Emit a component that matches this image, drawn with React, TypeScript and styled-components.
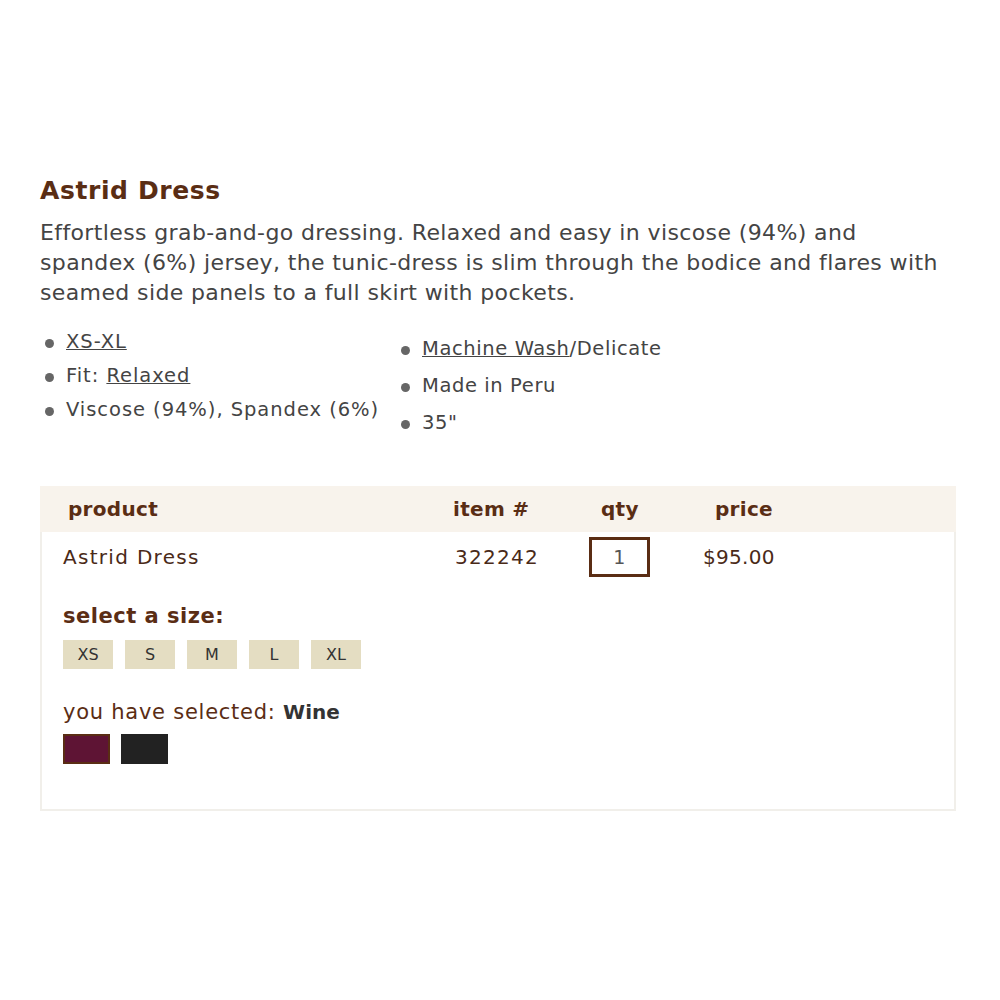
import styled, { createGlobalStyle } from 'styled-components';

const BROWN = '#5a2d14';
const TEXT = '#444';

const GlobalStyle = createGlobalStyle`
  body {
    margin: 0;
    background: #fff;
    font-family: 'DejaVu Sans', Verdana, sans-serif;
  }
`;

const sizes = ['XS', 'S', 'M', 'L', 'XL'];
const colors = [
  { name: 'Wine', hex: '#5e1434' },
  { name: 'Black', hex: '#222' },
];

export default function App() {
  return (
    <>
      <GlobalStyle />
      <Page>
        <Title>Astrid Dress</Title>
        <Description>
          Effortless grab-and-go dressing. Relaxed and easy in viscose (94%) and
          <br />
          spandex (6%) jersey, the tunic-dress is slim through the bodice and flares with
          <br />
          seamed side panels to a full skirt with pockets.
        </Description>
        <Details>
          <BulletList>
            <li>
              <a href="#">XS-XL</a>
            </li>
            <li>
              Fit: <a href="#">Relaxed</a>
            </li>
            <li>Viscose (94%), Spandex (6%)</li>
          </BulletList>
          <BulletList $offset>
            <li>
              <a href="#">Machine Wash</a>/Delicate
            </li>
            <li>Made in Peru</li>
            <li>35"</li>
          </BulletList>
        </Details>

        <OrderTable>
          <HeaderRow>
            <Cell $w={413} $pad={28}>product</Cell>
            <Cell $w={118}>item #</Cell>
            <Cell $w={144} $pad={30}>qty</Cell>
            <Cell>price</Cell>
          </HeaderRow>
          <ItemRow>
            <Cell $w={392} $spaced>Astrid Dress</Cell>
            <Cell $w={134} $spaced>322242</Cell>
            <Cell $w={114}>
              <QtyBox>1</QtyBox>
            </Cell>
            <Cell>$95.00</Cell>
          </ItemRow>
          <Options>
            <Label>select a size:</Label>
            <SizeRow>
              {sizes.map((s) => (
                <SizeButton key={s}>{s}</SizeButton>
              ))}
            </SizeRow>
            <Selected>
              you have selected: <strong>Wine</strong>
            </Selected>
            <SwatchRow>
              {colors.map((c, i) => (
                <Swatch key={c.name} $color={c.hex} $active={i === 0} title={c.name} />
              ))}
            </SwatchRow>
          </Options>
        </OrderTable>
      </Page>
    </>
  );
}

const Page = styled.div`
  width: 916px;
  padding: 176px 0 0 40px;
`;

const Title = styled.h1`
  margin: 0;
  font-size: 25px;
  line-height: 30px;
  letter-spacing: 0.6px;
  font-weight: bold;
  color: ${BROWN};
`;

const Description = styled.p`
  margin: 12px 0 0;
  font-size: 22px;
  line-height: 30px;
  letter-spacing: 0.38px;
  white-space: nowrap;
  color: ${TEXT};
`;

const Details = styled.div`
  display: flex;
  margin-top: 17px;
  padding-left: 4px;
`;

const BulletList = styled.ul<{ $offset?: boolean }>`
  margin: ${(p) => (p.$offset ? '5px' : '0')} 0 0;
  padding: 0;
  width: ${(p) => (p.$offset ? 'auto' : '356px')};
  list-style: none;
  font-size: 19.5px;
  letter-spacing: ${(p) => (p.$offset ? '0.6px' : '0.95px')};
  color: ${TEXT};

  li {
    position: relative;
    padding-left: 22px;
    white-space: nowrap;
    line-height: ${(p) => (p.$offset ? '37px' : '34px')};
  }

  li::before {
    content: '';
    position: absolute;
    left: 1px;
    top: 50%;
    width: 9px;
    height: 9px;
    margin-top: -3px;
    border-radius: 50%;
    background: #666;
  }

  a {
    color: ${TEXT};
    text-decoration: underline;
  }
`;

const OrderTable = styled.div`
  margin-top: 45px;
  border: 2px solid #f1efea;
  border-top: 0;
  height: 325px;
  box-sizing: border-box;
`;

const HeaderRow = styled.div`
  display: flex;
  align-items: center;
  height: 46px;
  margin: 0 -2px;
  background: #f8f3ec;
  font-weight: bold;
  font-size: 20px;
  color: ${BROWN};
`;

const ItemRow = styled.div`
  display: flex;
  align-items: center;
  height: 50px;
  padding-left: 21px;
  font-size: 20px;
  color: #4a2a18;
`;

const Cell = styled.div<{ $w?: number; $pad?: number; $spaced?: boolean }>`
  width: ${(p) => (p.$w ? `${p.$w}px` : 'auto')};
  padding-left: ${(p) => p.$pad ?? 0}px;
  letter-spacing: ${(p) => (p.$spaced ? '1.3px' : '0.3px')};
  box-sizing: border-box;
`;

const QtyBox = styled.div`
  width: 61px;
  height: 40px;
  box-sizing: border-box;
  border: 3px solid ${BROWN};
  display: flex;
  align-items: center;
  justify-content: center;
  font-size: 19px;
  color: #555;
`;

const Options = styled.div`
  padding: 21px 0 0 21px;
`;

const Label = styled.div`
  font-size: 21px;
  font-weight: bold;
  letter-spacing: 0.5px;
  color: ${BROWN};
  line-height: 26px;
`;

const SizeRow = styled.div`
  display: flex;
  gap: 12px;
  margin-top: 11px;
`;

const SizeButton = styled.div`
  width: 50px;
  height: 29px;
  display: flex;
  align-items: center;
  justify-content: center;
  background: #e4ddc2;
  font-size: 16px;
  color: #333;
`;

const Selected = styled.div`
  margin-top: 30px;
  font-size: 21px;
  line-height: 26px;
  letter-spacing: 0.75px;
  color: ${BROWN};

  strong {
    font-size: 20px;
    letter-spacing: 0;
    color: #333;
  }
`;

const SwatchRow = styled.div`
  display: flex;
  gap: 11px;
  margin-top: 9px;
`;

const Swatch = styled.div<{ $color: string; $active?: boolean }>`
  width: 47px;
  height: 30px;
  box-sizing: border-box;
  background: ${(p) => p.$color};
  border: 2px solid ${(p) => (p.$active ? BROWN : p.$color)};
`;
